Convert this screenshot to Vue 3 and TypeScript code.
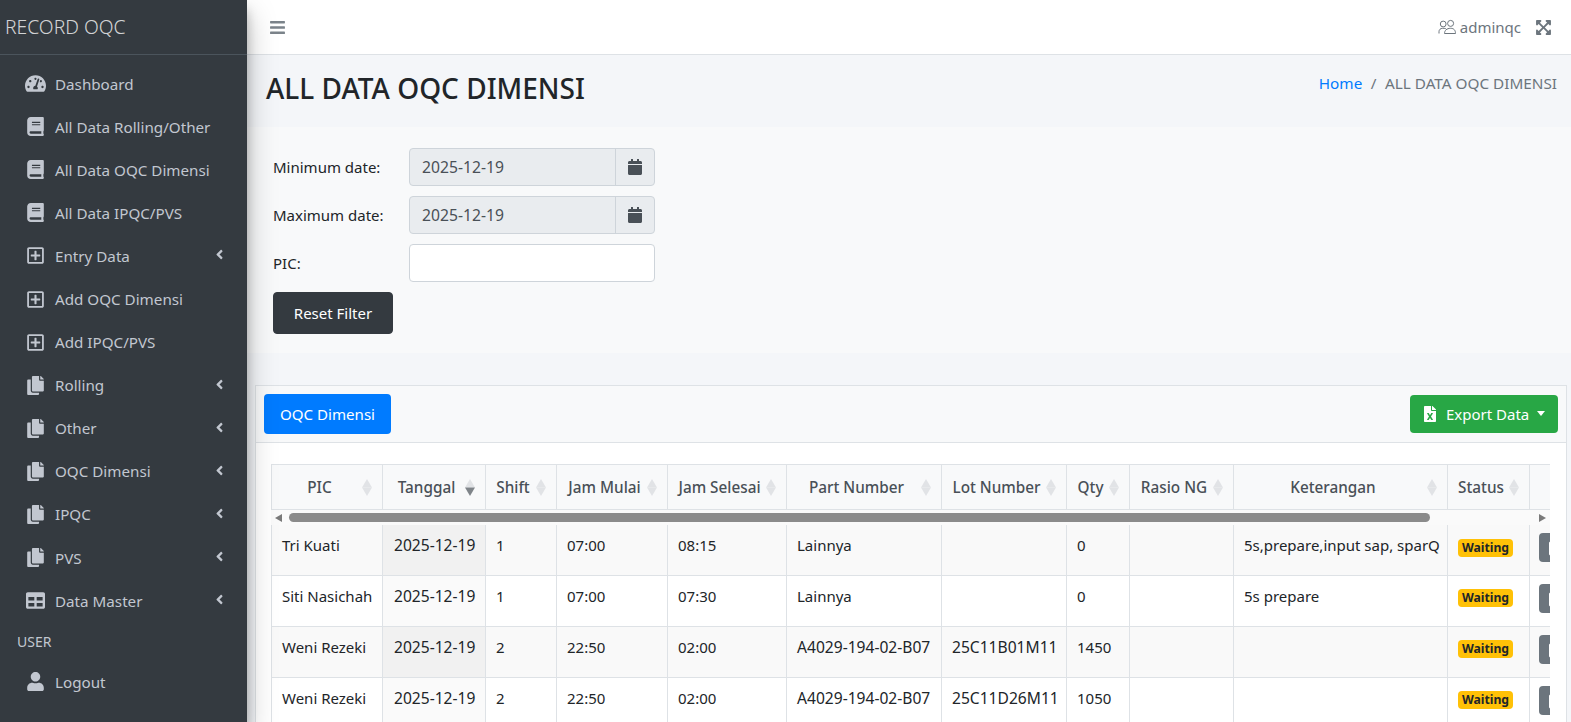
<template>
  <div class="layout">
    <aside class="sidebar">
      <div class="brand">RECORD OQC</div>
      <nav class="menu">
        <template v-for="item in menu" :key="item.label">
          <div class="menu-item">
            <svg class="menu-icon" :viewBox="icons[item.icon].box"><path :d="icons[item.icon].d" /></svg>
            <span class="menu-label">{{ item.label }}</span>
            <svg v-if="item.sub" class="menu-arrow" :viewBox="icons.angle.box"><path :d="icons.angle.d" /></svg>
          </div>
        </template>
        <div class="menu-header">USER</div>
        <div class="menu-item">
          <svg class="menu-icon" :viewBox="icons.user.box"><path :d="icons.user.d" /></svg>
          <span class="menu-label">Logout</span>
        </div>
      </nav>
    </aside>

    <div class="main">
      <header class="topbar">
        <svg class="bars" :viewBox="icons.bars.box"><path :d="icons.bars.d" /></svg>
        <div class="topbar-right">
          <svg class="people" viewBox="0 0 18 16" fill="none" stroke="currentColor" stroke-width="1">
            <circle cx="5.2" cy="5" r="2.9" />
            <circle cx="12.6" cy="4.4" r="3" />
            <path d="M1 14.5v-1.8c0-2 1.5-3.4 3.4-3.4H6c1.3 0 2.2.6 2.7 1.5" />
            <path d="M6.5 14.5c0-3 2.3-5.2 6-5.2s5 2.2 5 5.2z" />
          </svg>
          <span class="username">adminqc</span>
          <svg class="expand" :viewBox="icons.expand.box"><path :d="icons.expand.d" /></svg>
        </div>
      </header>

      <section class="page-head">
        <h1>ALL DATA OQC DIMENSI</h1>
        <div class="crumbs"><a>Home</a><span class="sep">/</span><span>ALL DATA OQC DIMENSI</span></div>
      </section>

      <section class="filters">
        <div class="filter-row" v-for="f in dateFilters" :key="f">
          <label>{{ f }}</label>
          <div class="date-group">
            <div class="date-input">2025-12-19</div>
            <div class="date-addon">
              <svg :viewBox="icons.calendar.box"><path :d="icons.calendar.d" /></svg>
            </div>
          </div>
        </div>
        <div class="filter-row">
          <label>PIC:</label>
          <input class="pic-input" type="text" />
        </div>
        <button class="reset-btn">Reset Filter</button>
      </section>

      <section class="card">
        <div class="card-head">
          <button class="tab-btn">OQC Dimensi</button>
          <button class="export-btn">
            <svg :viewBox="icons.excel.box"><path :d="icons.excel.d" /></svg>
            Export Data
            <i class="caret"></i>
          </button>
        </div>
        <div class="card-body">
          <div class="table-clip">
            <table class="head-table">
              <colgroup><col v-for="w in colWidths" :key="w.key" :style="{ width: w.width + 'px' }" /></colgroup>
              <thead>
                <tr>
                  <th v-for="(c, i) in columns" :key="i" :class="{ tight: c.tight }">
                    {{ c.label }}
                    <svg v-if="c.label" class="sorter" viewBox="0 0 10 17">
                      <polygon class="up" points="5,0 10,8.5 0,8.5" />
                      <polygon class="down" :class="{ active: c.label === 'Tanggal' }" points="0,8.5 10,8.5 5,17" />
                    </svg>
                  </th>
                </tr>
              </thead>
            </table>
            <div class="scrollbar">
              <i class="arrow-left"></i>
              <div class="thumb"></div>
              <i class="arrow-right"></i>
            </div>
            <table class="body-table">
              <colgroup><col v-for="w in colWidths" :key="w.key" :style="{ width: w.width + 'px' }" /></colgroup>
              <tbody>
                <tr v-for="(r, i) in rows" :key="i">
                  <td>{{ r.pic }}</td>
                  <td class="sorted wide">2025-12-19</td>
                  <td>{{ r.shift }}</td>
                  <td>{{ r.start }}</td>
                  <td>{{ r.end }}</td>
                  <td :class="{ wide: r.lot }">{{ r.part }}</td>
                  <td class="wide">{{ r.lot }}</td>
                  <td>{{ r.qty }}</td>
                  <td></td>
                  <td>{{ r.note }}</td>
                  <td><span class="badge">Waiting</span></td>
                  <td class="actions"><span class="act-btn"><i></i></span></td>
                </tr>
              </tbody>
            </table>
          </div>
        </div>
      </section>
    </div>
  </div>
</template>

<script setup lang="ts">
interface MenuItem {
  label: string
  icon: string
  sub?: boolean
}

const icons: Record<string, { box: string; d: string }> = {
  gauge: { box: '0 0 576 512', d: 'M288 32C128.94 32 0 160.94 0 320c0 52.8 14.25 102.26 39.06 144.8 5.61 9.62 16.3 15.2 27.44 15.2h443c11.14 0 21.83-5.58 27.44-15.2C561.75 422.26 576 372.8 576 320c0-159.06-128.94-288-288-288zm0 64c14.71 0 26.58 10.13 30.32 23.65-1.11 2.26-2.64 4.23-3.45 6.67l-9.22 27.67c-5.13 3.49-10.97 6.01-17.64 6.01-17.67 0-32-14.33-32-32S270.33 96 288 96zM96 384c-17.67 0-32-14.33-32-32s14.33-32 32-32 32 14.33 32 32-14.33 32-32 32zm48-160c-17.67 0-32-14.33-32-32s14.33-32 32-32 32 14.33 32 32-14.33 32-32 32zm246.77-72.41l-61.33 184C343.13 347.33 352 364.54 352 384c0 11.72-3.38 22.55-8.88 32H232.88c-5.5-9.45-8.88-20.28-8.88-32 0-33.94 26.5-61.43 59.9-63.59l61.34-184.01c4.17-12.56 17.73-19.45 30.36-15.17 12.57 4.19 19.35 17.79 15.17 30.36zm14.66 57.2l15.52-46.55c3.47-1.29 7.13-2.23 11.05-2.23 17.67 0 32 14.33 32 32s-14.33 32-32 32c-11.38-.01-20.89-6.28-26.57-15.22zM480 384c-17.67 0-32-14.33-32-32s14.33-32 32-32 32 14.33 32 32-14.33 32-32 32z' },
  book: { box: '0 0 448 512', d: 'M448 360V24c0-13.3-10.7-24-24-24H96C43 0 0 43 0 96v320c0 53 43 96 96 96h328c13.3 0 24-10.7 24-24v-16c0-7.5-3.5-14.3-8.9-18.7-4.2-15.4-4.2-59.3 0-74.7 5.4-4.3 8.9-11.1 8.9-18.6zM128 134c0-3.3 2.7-6 6-6h212c3.3 0 6 2.7 6 6v20c0 3.3-2.7 6-6 6H134c-3.3 0-6-2.7-6-6v-20zm0 64c0-3.3 2.7-6 6-6h212c3.3 0 6 2.7 6 6v20c0 3.3-2.7 6-6 6H134c-3.3 0-6-2.7-6-6v-20zm253.4 250H96c-17.7 0-32-14.3-32-32 0-17.6 14.4-32 32-32h285.4c-1.9 17.1-1.9 46.9 0 64z' },
  plus: { box: '0 0 448 512', d: 'M352 240v32c0 6.6-5.4 12-12 12h-88v88c0 6.6-5.4 12-12 12h-32c-6.6 0-12-5.4-12-12v-88h-88c-6.6 0-12-5.4-12-12v-32c0-6.6 5.4-12 12-12h88v-88c0-6.6 5.4-12 12-12h32c6.6 0 12 5.4 12 12v88h88c6.6 0 12 5.4 12 12zm96-160v352c0 26.5-21.5 48-48 48H48c-26.5 0-48-21.5-48-48V80c0-26.5 21.5-48 48-48h352c26.5 0 48 21.5 48 48zm-48 346V86c0-3.3-2.7-6-6-6H54c-3.3 0-6 2.7-6 6v340c0 3.3 2.7 6 6 6h340c3.3 0 6-2.7 6-6z' },
  copy: { box: '0 0 448 512', d: 'M320 448v40c0 13.255-10.745 24-24 24H24c-13.255 0-24-10.745-24-24V120c0-13.255 10.745-24 24-24h72v296c0 30.879 25.121 56 56 56h168zm0-344V0H152c-13.255 0-24 10.745-24 24v368c0 13.255 10.745 24 24 24h272c13.255 0 24-10.745 24-24V128H344c-13.2 0-24-10.8-24-24zm120.971-31.029L375.029 7.029A24 24 0 0 0 358.059 0H352v96h96v-6.059a24 24 0 0 0-7.029-16.97z' },
  table: { box: '0 0 512 512', d: 'M464 32H48C21.49 32 0 53.49 0 80v352c0 26.51 21.49 48 48 48h416c26.51 0 48-21.49 48-48V80c0-26.51-21.49-48-48-48zM224 416H64v-96h160v96zm0-160H64v-96h160v96zm224 160H288v-96h160v96zm0-160H288v-96h160v96z' },
  user: { box: '0 0 448 512', d: 'M224 256c70.7 0 128-57.3 128-128S294.7 0 224 0 96 57.3 96 128s57.3 128 128 128zm89.6 32h-16.7c-22.2 10.2-46.9 16-72.9 16s-50.6-5.8-72.9-16h-16.7C60.2 288 0 348.2 0 422.4V464c0 26.5 21.5 48 48 48h352c26.5 0 48-21.5 48-48v-41.6c0-74.2-60.2-134.4-134.4-134.4z' },
  angle: { box: '0 0 256 512', d: 'M31.7 239l136-136c9.4-9.4 24.6-9.4 33.9 0l22.6 22.6c9.4 9.4 9.4 24.6 0 33.9L127.9 256l96.4 96.4c9.4 9.4 9.4 24.6 0 33.9L201.7 409c-9.4 9.4-24.6 9.4-33.9 0l-136-136c-9.5-9.4-9.5-24.6-.1-34z' },
  bars: { box: '0 0 448 512', d: 'M16 132h416c8.837 0 16-7.163 16-16V76c0-8.837-7.163-16-16-16H16C7.163 60 0 67.163 0 76v40c0 8.837 7.163 16 16 16zm0 160h416c8.837 0 16-7.163 16-16v-40c0-8.837-7.163-16-16-16H16c-8.837 0-16 7.163-16 16v40c0 8.837 7.163 16 16 16zm0 160h416c8.837 0 16-7.163 16-16v-40c0-8.837-7.163-16-16-16H16c-8.837 0-16 7.163-16 16v40c0 8.837 7.163 16 16 16z' },
  expand: { box: '0 0 448 512', d: 'M448 344v112a23.94 23.94 0 0 1-24 24H312c-21.39 0-32.09-25.9-17-41l36.2-36.2L224 295.6 116.77 402.9 153 439c15.09 15.1 4.39 41-17 41H24a23.94 23.94 0 0 1-24-24V344c0-21.4 25.89-32.1 41-17l36.19 36.2L184.46 256 77.18 148.7 41 185c-15.1 15.1-41 4.4-41-17V56a23.94 23.94 0 0 1 24-24h112c21.39 0 32.09 25.9 17 41l-36.2 36.2L224 216.4l107.23-107.3L295 73c-15.09-15.1-4.39-41 17-41h112a23.94 23.94 0 0 1 24 24v112c0 21.4-25.89 32.1-41 17l-36.19-36.2L263.54 256l107.28 107.3L407 327.1c15.1-15.2 41-4.5 41 16.9z' },
  calendar: { box: '0 0 448 512', d: 'M12 192h424c6.6 0 12 5.4 12 12v260c0 26.5-21.5 48-48 48H48c-26.5 0-48-21.5-48-48V204c0-6.6 5.4-12 12-12zm436-44v-36c0-26.5-21.5-48-48-48h-48V12c0-6.6-5.4-12-12-12h-40c-6.6 0-12 5.4-12 12v52H160V12c0-6.6-5.4-12-12-12h-40c-6.6 0-12 5.4-12 12v52H48C21.5 64 0 85.5 0 112v36c0 6.6 5.4 12 12 12h424c6.6 0 12-5.4 12-12z' },
  excel: { box: '0 0 384 512', d: 'M224 136V0H24C10.7 0 0 10.7 0 24v464c0 13.3 10.7 24 24 24h336c13.3 0 24-10.7 24-24V160H248c-13.2 0-24-10.8-24-24zm60.1 106.5L224 336l60.1 93.5c5.1 8-.6 18.5-10.1 18.5h-34.9c-4.4 0-8.5-2.4-10.6-6.3C208.9 405.5 192 373 192 373c-6.4 14.8-10 20-36.6 68.8-2.1 3.9-6.1 6.3-10.5 6.3H110c-9.5 0-15.2-10.5-10.1-18.5l60.3-93.5-60.3-93.5c-5.2-8 .6-18.5 10.1-18.5h34.8c4.4 0 8.5 2.4 10.6 6.3 26.1 48.8 20 33.6 36.6 68.5 0 0 6.1-11.7 36.6-68.5 2.1-3.9 6.2-6.3 10.6-6.3H274c9.5-.1 15.2 10.4 10.1 18.4zM384 121.9v6.1H256V0h6.1c6.4 0 12.5 2.5 17 7l97.9 98c4.5 4.5 7 10.6 7 16.9z' }
}

const menu: MenuItem[] = [
  { label: 'Dashboard', icon: 'gauge' },
  { label: 'All Data Rolling/Other', icon: 'book' },
  { label: 'All Data OQC Dimensi', icon: 'book' },
  { label: 'All Data IPQC/PVS', icon: 'book' },
  { label: 'Entry Data', icon: 'plus', sub: true },
  { label: 'Add OQC Dimensi', icon: 'plus' },
  { label: 'Add IPQC/PVS', icon: 'plus' },
  { label: 'Rolling', icon: 'copy', sub: true },
  { label: 'Other', icon: 'copy', sub: true },
  { label: 'OQC Dimensi', icon: 'copy', sub: true },
  { label: 'IPQC', icon: 'copy', sub: true },
  { label: 'PVS', icon: 'copy', sub: true },
  { label: 'Data Master', icon: 'table', sub: true }
]

const dateFilters = ['Minimum date:', 'Maximum date:']

const columns = [
  { label: 'PIC' },
  { label: 'Tanggal' },
  { label: 'Shift', tight: true },
  { label: 'Jam Mulai' },
  { label: 'Jam Selesai' },
  { label: 'Part Number' },
  { label: 'Lot Number' },
  { label: 'Qty' },
  { label: 'Rasio NG' },
  { label: 'Keterangan' },
  { label: 'Status' },
  { label: '' }
]

const colWidths = [111, 103, 71, 111, 119, 155, 125, 63, 104, 214, 82, 60].map((width, key) => ({ key, width }))

const rows = [
  { pic: 'Tri Kuati', shift: 1, start: '07:00', end: '08:15', part: 'Lainnya', lot: '', qty: 0, note: '5s,prepare,input sap, sparQ' },
  { pic: 'Siti Nasichah', shift: 1, start: '07:00', end: '07:30', part: 'Lainnya', lot: '', qty: 0, note: '5s prepare' },
  { pic: 'Weni Rezeki', shift: 2, start: '22:50', end: '02:00', part: 'A4029-194-02-B07', lot: '25C11B01M11', qty: 1450, note: '' },
  { pic: 'Weni Rezeki', shift: 2, start: '22:50', end: '02:00', part: 'A4029-194-02-B07', lot: '25C11D26M11', qty: 1050, note: '' }
]
</script>

<style>
html, body { margin: 0; height: 100%; overflow: hidden; }
</style>

<style scoped>
.layout {
  display: flex;
  height: 722px;
  overflow: hidden;
  font-family: "Noto Sans", "Liberation Sans", sans-serif;
  font-size: 15px;
  color: #212529;
  background: #f4f6f9;
}

.sidebar {
  flex: 0 0 247px;
  background: #343a40;
  color: #c2c7d0;
  box-shadow: 0 14px 28px rgba(0, 0, 0, .25), 0 10px 10px rgba(0, 0, 0, .22);
  z-index: 2;
}

.brand {
  height: 54px;
  line-height: 54px;
  padding-left: 5px;
  font-size: 19.3px;
  font-weight: 300;
  color: rgba(255, 255, 255, .8);
  border-bottom: 1px solid #4b545c;
}

.menu { padding-top: 7px; }

.menu-item {
  display: flex;
  align-items: center;
  height: 43.1px;
  padding-left: 24.5px;
  padding-right: 23px;
  font-size: 15.2px;
}

.menu-icon {
  width: 21px;
  height: 19px;
  fill: #c2c7d0;
  flex: none;
}

.menu-label {
  margin-left: 9.5px;
  flex: 1;
  white-space: nowrap;
}

.menu-arrow {
  width: 9px;
  height: 15px;
  margin-top: -2px;
  fill: #c2c7d0;
  flex: none;
}

.menu-header {
  height: 36px;
  padding-top: 2px;
  line-height: 36px;
  padding-left: 17px;
  font-size: 14px;
}

.main {
  flex: 1;
  min-width: 0;
}

.topbar {
  display: flex;
  align-items: center;
  justify-content: space-between;
  height: 54px;
  background: #fff;
  border-bottom: 1px solid #dee2e6;
  padding: 0 20px 0 23px;
  color: #6c757d;
}

.bars {
  width: 15px;
  height: 17px;
  fill: #7b838a;
}

.topbar-right {
  display: flex;
  align-items: center;
  color: #6c757d;
}

.people {
  width: 18px;
  height: 16px;
  margin-right: 4px;
}

.username { font-size: 15px; }

.expand {
  width: 15px;
  height: 17px;
  fill: #6c757d;
  margin-left: 15px;
}

.page-head {
  display: flex;
  justify-content: space-between;
  align-items: flex-start;
  height: 72px;
  box-sizing: border-box;
  padding: 0 14px 0 19px;
}

.page-head h1 {
  margin: 14px 0 0;
  font-size: 28px;
  font-weight: 500;
  line-height: 38px;
  color: #212529;
}

.crumbs {
  margin-top: 18px;
  font-size: 15.3px;
  color: #6c757d;
  white-space: nowrap;
}

.crumbs a { color: #007bff; }
.crumbs .sep { padding: 0 8.5px; }

.filters {
  height: 226px;
  box-sizing: border-box;
  padding: 21px 0 0 26px;
  background: #f8f9fa;
}

.filter-row {
  display: flex;
  align-items: center;
  height: 38px;
  margin-bottom: 10px;
}

.filter-row label {
  width: 136px;
  font-size: 15px;
}

.date-group {
  display: flex;
  width: 246px;
  height: 38px;
  box-sizing: border-box;
  border: 1px solid #ced4da;
  border-radius: 4px;
  background: #e9ecef;
}

.date-input {
  flex: 1;
  padding-left: 12px;
  line-height: 36px;
  font-size: 15.7px;
  color: #495057;
  border-right: 1px solid #ced4da;
}

.date-addon {
  width: 38px;
  display: flex;
  align-items: center;
  justify-content: center;
}

.date-addon svg {
  width: 14px;
  height: 16px;
  fill: #495057;
}

.pic-input {
  width: 246px;
  height: 38px;
  box-sizing: border-box;
  border: 1px solid #ced4da;
  border-radius: 4px;
  background: #fff;
  outline: none;
}

.reset-btn {
  display: block;
  width: 120px;
  height: 42px;
  border: 1px solid #343a40;
  border-radius: 4px;
  background: #343a40;
  color: #fff;
  font-family: inherit;
  font-size: 15px;
}

.card {
  margin: 32px 4px 0 8px;
  background: #fff;
  border: 1px solid #dee2e6;
}

.card-head {
  display: flex;
  justify-content: space-between;
  align-items: center;
  height: 57px;
  box-sizing: border-box;
  padding: 0 8px;
  background: #f8f9fa;
  border-bottom: 1px solid #dee2e6;
}

.tab-btn {
  width: 127px;
  height: 40px;
  border: 0;
  border-radius: 4px;
  background: #007bff;
  color: #fff;
  font-family: inherit;
  font-size: 15.1px;
}

.export-btn {
  display: flex;
  align-items: center;
  height: 38px;
  width: 148px;
  padding: 0 0 0 14px;
  border: 0;
  border-radius: 4px;
  background: #28a745;
  color: #fff;
  font-family: inherit;
  font-size: 15px;
  white-space: nowrap;
}

.export-btn svg {
  width: 12px;
  height: 16px;
  fill: #fff;
  margin-right: 10px;
}

.caret {
  margin-left: 8px;
  margin-top: -2px;
  border-top: 5px solid #fff;
  border-left: 4.5px solid transparent;
  border-right: 4.5px solid transparent;
}

.card-body { padding: 21px 16px 0 15px; }

.table-clip {
  overflow: hidden;
  height: 300px;
}

table {
  border-collapse: collapse;
  table-layout: fixed;
  width: 1317px;
}

th, td {
  border: 1px solid #dee2e6;
  box-sizing: border-box;
  white-space: nowrap;
  overflow: hidden;
}

.head-table th {
  position: relative;
  height: 45px;
  padding: 0 22px 0 7px;
  background: #f8f9fa;
  color: #495057;
  font-size: 15.3px;
  font-weight: 500;
  text-align: center;
}

.head-table th.tight { padding: 0 16px 0 0; }

.sorter {
  position: absolute;
  right: 10px;
  top: 50%;
  margin-top: -8.5px;
  width: 10px;
  height: 17px;
}

.sorter .up,
.sorter .down { fill: #e1e3e6; }
.sorter .down.active { fill: #7f8489; }

.scrollbar {
  display: flex;
  align-items: center;
  height: 15px;
  background: #fafafa;
  padding-left: 4px;
  width: 1280px;
  box-sizing: border-box;
  position: relative;
}

.arrow-left {
  border-right: 7px solid #7a7a7a;
  border-top: 4.5px solid transparent;
  border-bottom: 4.5px solid transparent;
}

.thumb {
  width: 1141px;
  height: 9px;
  margin-left: 7px;
  border-radius: 5px;
  background: #8b8b8b;
}

.arrow-right {
  position: absolute;
  right: 5px;
  border-left: 7px solid #7a7a7a;
  border-top: 4.5px solid transparent;
  border-bottom: 4.5px solid transparent;
}

.body-table td {
  height: 51px;
  padding: 8px 10px 0;
  line-height: 24px;
  vertical-align: top;
  font-size: 15px;
  color: #212529;
}

.body-table td.wide { font-size: 15.6px; }
.body-table td.sorted { padding-left: 11px; }
.body-table td.actions { padding-left: 9px; }
.body-table tr:first-child td { border-top: 0; height: 50px; }
.body-table tr:nth-child(odd) td { background: #f9f9f9; }
.body-table tr:nth-child(odd) td.sorted { background: #f1f1f1; }
.body-table tr:nth-child(even) td.sorted { background: #fafafa; }

.badge {
  display: inline-block;
  padding: 0 4px;
  height: 18px;
  line-height: 18px;
  border-radius: 4px;
  background: #ffc107;
  color: #212529;
  font-size: 12.2px;
  font-weight: 700;
  vertical-align: middle;
  margin-top: 2px;
}

.act-btn {
  display: block;
  width: 40px;
  height: 29px;
  border-radius: 4px;
  background: #6c757d;
  position: relative;
}

.act-btn i {
  position: absolute;
  left: 10px;
  top: 8px;
  width: 10px;
  height: 13px;
  box-sizing: content-box;
  border: 1.5px solid #fff;
  border-radius: 2px;
}
</style>
